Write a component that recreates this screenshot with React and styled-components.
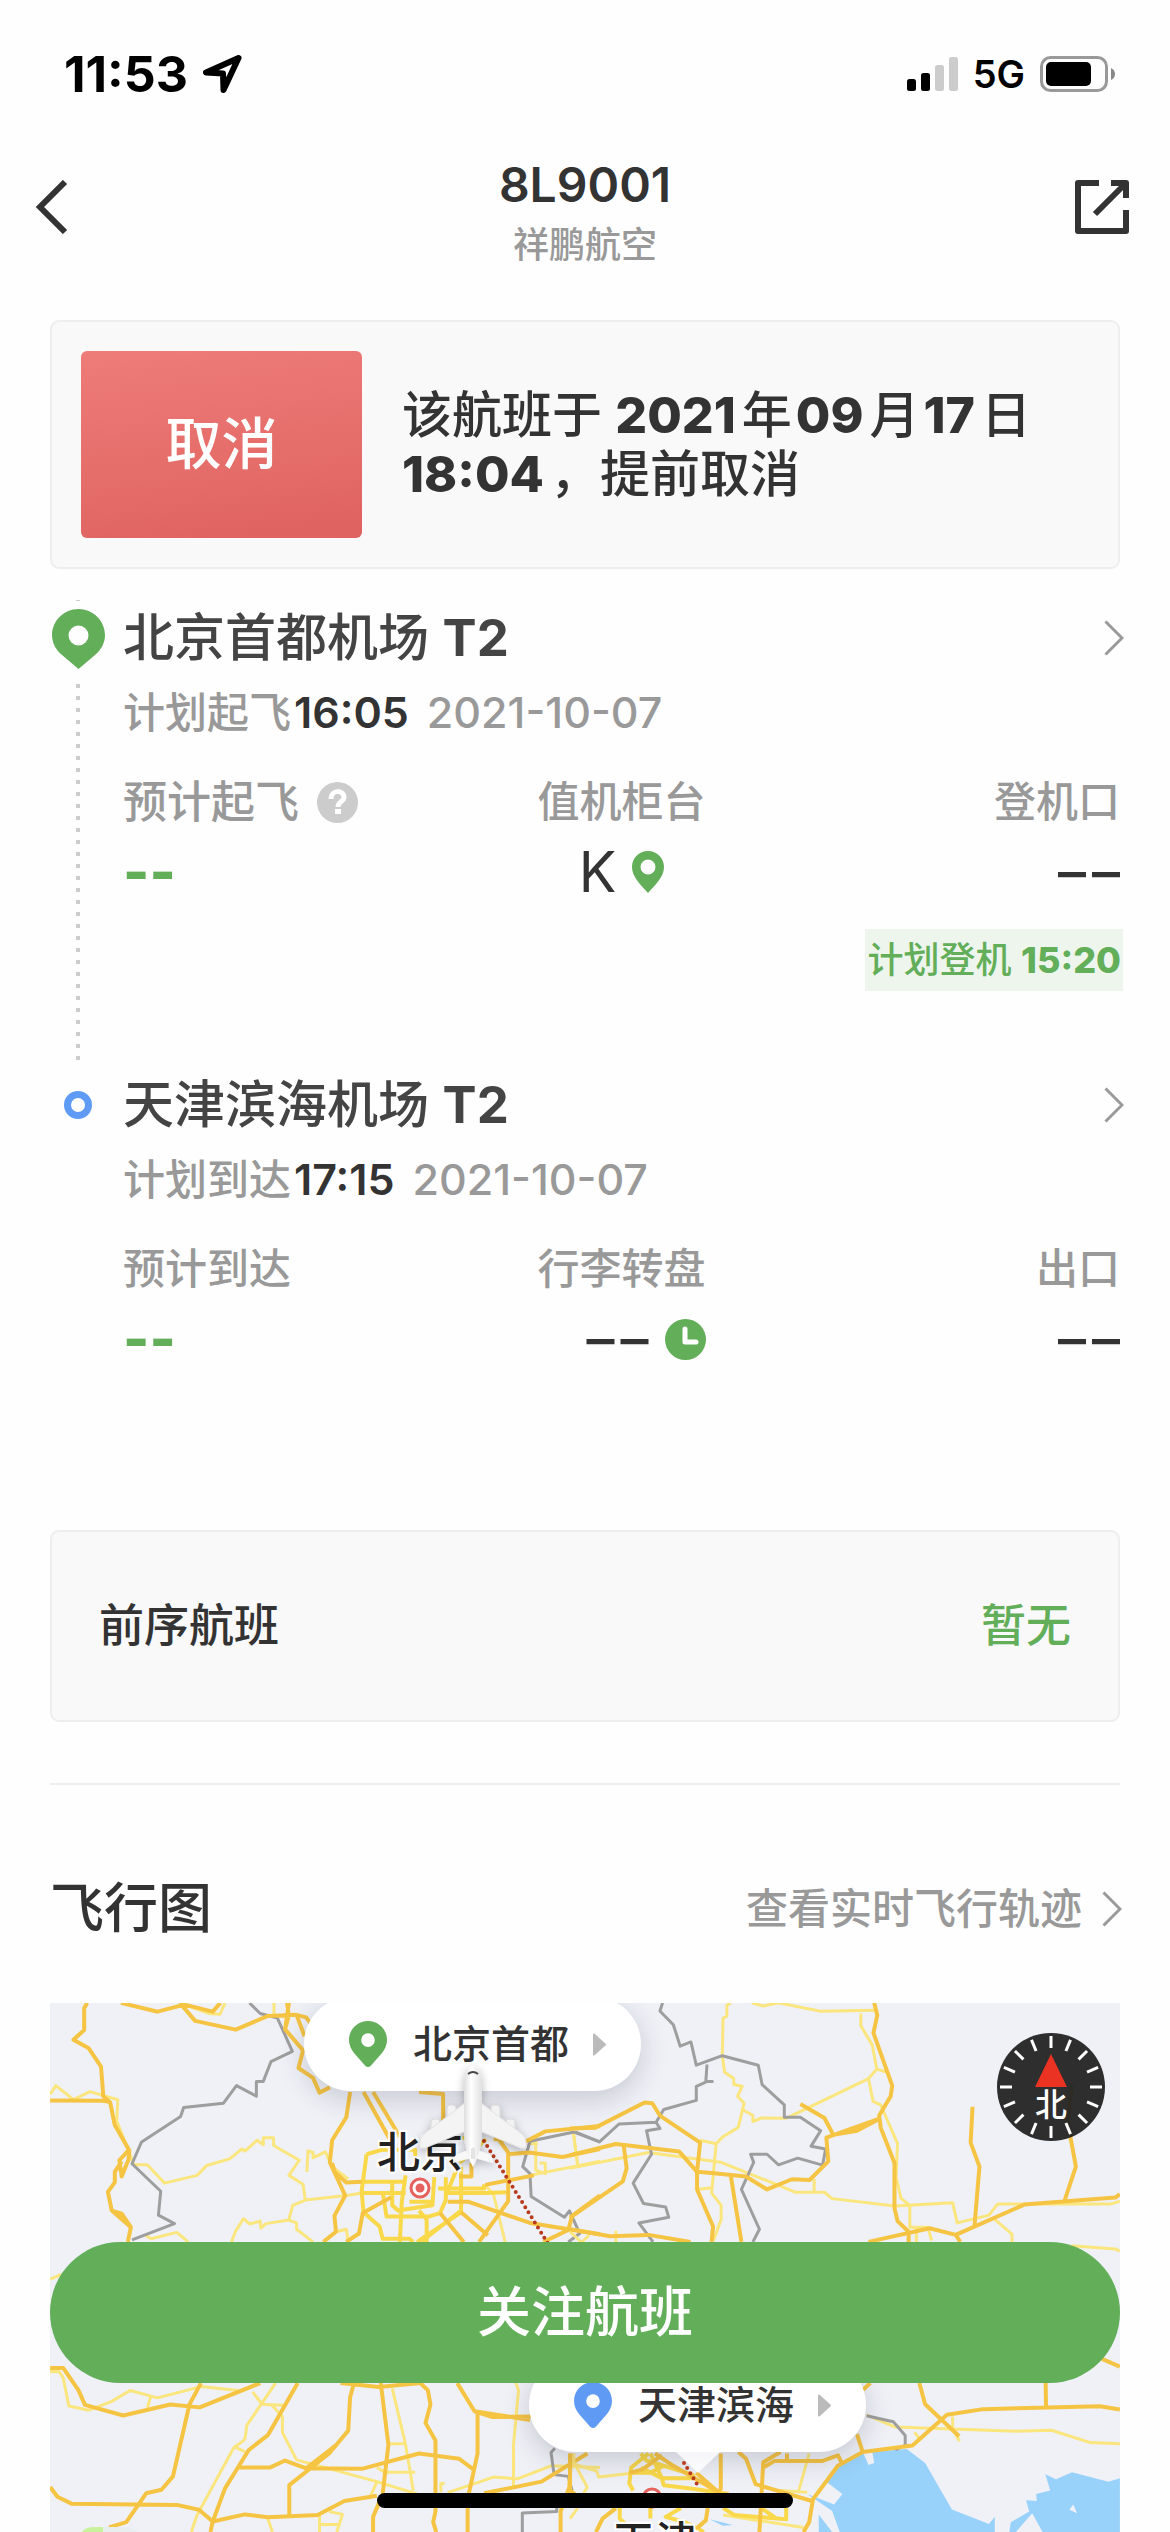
import React from "react";
import styled, { createGlobalStyle } from "styled-components";

const color = {
  ink: "#333333",
  title: "#444444",
  muted: "#999999",
  line: "#eeeeee",
  panel: "#f9f9f9",
  green: "#62ae59",
  blue: "#5f9bf5",
};

const GlobalStyle = createGlobalStyle`
  * { box-sizing: border-box; }
  body {
    margin: 0;
    background: #fefefe;
    color: ${color.ink};
    font-family: Inter, "Noto Sans CJK SC", sans-serif;
    font-weight: 500;
  }
  button { border: 0; padding: 0; background: none; color: inherit; font: inherit; cursor: pointer; }
  a { color: inherit; text-decoration: none; }
  h1, h2, p, dl, dd { margin: 0; font-weight: inherit; }
  svg { display: block; flex: none; }
`;

const Page = styled.div`
  display: flex;
  flex-direction: column;
  min-height: 100vh;
`;

const StatusBar = styled.div`
  display: flex;
  align-items: center;
  justify-content: space-between;
  height: 148px;
  padding: 0 54px 0 64px;
  color: #000;
`;

const StatusGroup = styled.div`
  display: flex;
  align-items: center;
  gap: 15px;
  font-size: ${(p) => p.$size}px;
  line-height: 60px;
  font-weight: ${(p) => p.$weight};
`;

const NavBar = styled.header`
  display: grid;
  grid-template-columns: 1fr auto 1fr;
  align-items: start;
  padding: 0 36px;
  margin-bottom: 47px;
`;

const NavButton = styled.button`
  justify-self: ${(p) => p.$side};
  padding: 32px 0;
`;

const NavTitle = styled.div`
  padding-top: 4px;
  text-align: center;
`;

const FlightNumber = styled.h1`
  font-size: 48px;
  font-weight: 600;
  line-height: 66px;
`;

const Airline = styled.p`
  font-size: 36px;
  line-height: 55px;
  color: ${color.muted};
`;

const Main = styled.main`
  display: flex;
  flex: 1;
  flex-direction: column;
  padding: 0 50px;
`;

const Panel = styled.section`
  display: flex;
  align-items: center;
  border: 2px solid ${color.line};
  border-radius: 9px;
  background: ${color.panel};
`;

const Notice = styled(Panel)`
  gap: 40px;
  padding: 29px;
`;

const StatusTag = styled.strong`
  flex: none;
  width: 281px;
  border-radius: 6px;
  background: linear-gradient(172deg, #ee7c79, #de625f);
  color: #fff;
  font-size: 56px;
  font-weight: 500;
  line-height: 187px;
  text-align: center;
`;

const NoticeText = styled.p`
  max-width: 660px;
  font-size: 50px;
  line-height: 59px;
`;

const Digits = styled.span`
  font-weight: 800;
`;

const DateDigits = styled(Digits)`
  margin: 0 6px 0 ${(p) => (p.$lead ? 4 : 0)}px;
`;

const Timeline = styled.div`
  padding-top: 31px;
`;

const Stop = styled.section`
  display: grid;
  grid-template-columns: 56px 1fr;
  gap: 17px;
`;

const Rail = styled.div`
  display: flex;
  flex-direction: column;
  align-items: center;
  gap: ${(p) => p.$gap}px;
  padding: ${(p) => p.$pad};
`;

const RailTip = styled.span`
  width: 4px;
  height: 1px;
  margin-bottom: -7px;
  background: #ccc;
`;

const DottedLine = styled.span`
  flex: 1;
  width: 4px;
  background: repeating-linear-gradient(#ccc 0 4px, transparent 4px 12px);
`;

const StopBody = styled.div`
  padding: ${(p) => p.$pad};
`;

const AirportLink = styled.a`
  display: flex;
  align-items: center;
  justify-content: space-between;
  margin-right: -4px;
`;

const AirportName = styled.h2`
  font-size: 51px;
  line-height: 60px;
  color: ${color.title};
`;

const Terminal = styled.span`
  font-weight: 700;
`;

const Schedule = styled.p`
  margin-top: 15px;
  font-size: 42px;
  line-height: 60px;
  color: ${color.muted};
`;

const ScheduleDate = styled.time`
  font-size: 43px;
  line-height: 1;
`;

const ScheduleTime = styled(ScheduleDate)`
  margin: 0 18px 0 3px;
  color: ${color.ink};
  font-weight: 600;
`;

const Facts = styled.dl`
  display: grid;
  grid-template-columns: 1fr auto 1fr;
  margin-top: 29px;
`;

const Fact = styled.div`
  justify-self: ${(p) => p.$side};
`;

const FactLabel = styled.dt`
  display: flex;
  align-items: center;
  justify-content: ${(p) => p.$side};
  gap: 18px;
  font-size: ${(p) => p.$size || 42}px;
  line-height: 60px;
  color: ${color.muted};
`;

const FactValue = styled.dd`
  display: flex;
  align-items: center;
  justify-content: ${(p) => p.$side};
  gap: 16px;
  margin-top: 10px;
  font-size: 56px;
  line-height: 60px;
  font-weight: ${(p) => (p.$estimate ? 800 : 400)};
  color: ${(p) => (p.$estimate ? color.green : color.ink)};
`;

const Dashes = styled.span`
  display: flex;
  gap: 6px;
  font-weight: 500;
`;

const BoardingBadge = styled.p`
  width: max-content;
  margin: 27px -3px 0 auto;
  padding: 0 2px;
  background: #eef5ed;
  color: ${color.green};
  font-size: 36px;
  line-height: 62px;
`;

const PreviousFlight = styled(Panel)`
  justify-content: space-between;
  margin-top: 161px;
  padding: 64px 47px;
  font-size: 45px;
  line-height: 60px;
`;

const NoneValue = styled.span`
  color: ${color.green};
`;

const Divider = styled.hr`
  width: 100%;
  height: 2px;
  margin: 61px 0 0;
  border: 0;
  background: ${color.line};
`;

const SectionHead = styled.div`
  display: flex;
  align-items: center;
  justify-content: space-between;
  margin: 94px -2px 64px 0;
  line-height: 60px;
`;

const SectionTitle = styled.h2`
  font-size: 54px;
`;

const TrackLink = styled.a`
  display: flex;
  align-items: center;
  gap: 20px;
  font-size: 42px;
  color: ${color.muted};
`;

const MapBox = styled.div`
  position: relative;
  flex: 1;
  min-height: 520px;
  overflow: hidden;
  background: #eff1f7;
`;

const MapDrawing = styled.svg`
  position: absolute;
  inset: 0;
  width: 100%;
  height: 529px;
  pointer-events: none;
`;

const MapPin = styled.button`
  position: absolute;
  top: ${(p) => p.$y}px;
  left: calc(50% + ${(p) => p.$x}px);
  display: flex;
  align-items: center;
  width: 337px;
  height: 94px;
  padding: 0 35px 0 45px;
  border-radius: 47px;
  background: #fff;
  box-shadow: 0 8px 28px rgba(40, 40, 60, 0.2);
  font-size: 39px;
  line-height: 60px;
`;

const PinName = styled.span`
  flex: 1;
  padding-left: 26px;
  text-align: left;
`;

const CityName = styled.span`
  position: absolute;
  top: ${(p) => p.$y}px;
  left: calc(50% + ${(p) => p.$x}px);
  color: #222;
  font-size: 43px;
  line-height: 60px;
  text-shadow: 0 0 2px #fff, 2px 2px 1px #fff, -2px -2px 1px #fff, 2px -2px 1px #fff, -2px 2px 1px #fff;
`;

const Compass = styled.button`
  position: absolute;
  top: 30px;
  right: 15px;
  width: 108px;
  height: 108px;
  border-radius: 50%;
  background: rgba(35, 35, 35, 0.95);
  color: #fff;
`;

const CompassDial = styled.svg`
  position: absolute;
  inset: 0;
`;

const CompassLabel = styled.span`
  display: block;
  padding-top: 36px;
  font-size: 32px;
  line-height: 72px;
`;

const FollowBar = styled.div`
  position: fixed;
  right: 50px;
  bottom: 149px;
  left: 50px;
  display: flex;
`;

const FollowButton = styled.button`
  flex: 1;
  height: 141px;
  border-radius: 71px;
  background: ${color.green};
  color: #fff;
  font-size: 54px;
  line-height: 60px;
`;

const HomeIndicator = styled.div`
  position: fixed;
  bottom: 24px;
  left: 50%;
  width: 416px;
  height: 15px;
  border-radius: 8px;
  background: #000;
  transform: translateX(-50%);
`;

const Chevron = () => (
  <svg width="20" height="36" viewBox="0 0 20 36" fill="none" stroke={color.muted} strokeWidth="3" aria-hidden="true">
    <path d="M1.5 1.5 18 18 1.5 34.5" />
  </svg>
);

const RailPin = () => (
  <svg width="53" height="60" viewBox="0 0 53 60" aria-hidden="true">
    <path fill={color.green} fillRule="evenodd" d="M26.500 0C41 0 53 12 53 26c0 8-4 15-10 20L26.500 60 10 46C4 41 0 34 0 26 0 12 12 0 26.500 0Zm0 16.500a10 10 0 1 0 0 20 10 10 0 0 0 0-20Z" />
  </svg>
);

const DropPin = ({ fill }) => (
  <svg width="38" height="46" viewBox="0 0 38 46" aria-hidden="true">
    <path fill={fill} fillRule="evenodd" d="M19 0c10.500 0 19 8.400 19 19 0 5-2 9-5 13L22 44.500c-2 2-4 2-6 0L5 32C2 28 0 24 0 19 0 8.400 8.500 0 19 0Zm0 12.300a6.800 6.800 0 1 0 0 13.600 6.800 6.800 0 0 0 0-13.600Z" />
  </svg>
);

const CounterPin = () => (
  <svg width="32" height="42" viewBox="0 0 32 42" aria-hidden="true">
    <path fill={color.green} fillRule="evenodd" d="M16 0c9 0 16 7 16 16 0 10-9 18-16 26C9 34 0 26 0 16 0 7 7 0 16 0Zm0 8.500a7.500 7.500 0 1 0 0 15 7.500 7.500 0 0 0 0-15Z" />
  </svg>
);

const Play = () => (
  <svg width="13" height="23" viewBox="0 0 13 23" aria-hidden="true">
    <path fill="#bbb" stroke="#bbb" strokeLinejoin="round" strokeWidth="2" d="M1 1.500 12 11.500 1 21.500Z" />
  </svg>
);

const motorways = [
  "M228 65 220 80V142L192 170 232 194 264 246 270 330 288 348 300 412 338 484 336 510 318 558 312 512 334 486M318 515 300 545V575L282 602 292 655 342 702 334 744M292 655 318 664 342 702",
  "M131 342 270 343 288 347M316 65 412 90 482 70 556 90 576 65M470 65 510 116 616 141 700 102 775 99 800 106 830 150M750 65 755 100 745 140 792 200 780 250 818 278 835 320 862 305M775 99 796 160M745 140 755 65",
  "M915 318 905 390 868 455 862 518 902 612 874 670 878 715 845 744M868 520 875 545 905 575 945 573M950 318 1020 455M975 318 1045 445M1095 318 1158 324V440M1262 390 1328 490V628L1252 744M905 744 938 720 948 662 1022 617M1170 630H1225L1385 690 1568 722M1290 452 1375 458 1425 430 1568 415M1328 495 1382 490 1470 503 1568 480M1568 612 1495 670 1485 710 1420 744M1268 582 1395 555M1232 520V558H1200M1150 662 1212 744M1205 660 1275 725",
  "M131 1102H165L205 1165 222 1207 322 1237 445 1206 522 1214 680 1145M525 1145 495 1206 452 1410 422 1448 382 1458 330 1540 285 1555M131 1440 150 1468 188 1488 462 1491 520 1505 556 1538 550 1568M778 1145 700 1293 650 1335 588 1444 556 1538 640 1518 700 1526 830 1520 900 1480 985 1465",
  "M925 1145 915 1185 910 1280 860 1345 756 1435V1520M625 1385H705L745 1365 800 1387 948 1388 1095 1345 1200 1360 1240 1392M880 1320 800 1387M890 1145 990 1156 1100 1145M995 1145 1015 1320 1000 1460 975 1525V1568M1098 1145 1118 1165 1125 1206 1112 1258 1138 1308V1510L1132 1540 1140 1568M1195 1145 1240 1225 1285 1241 1400 1240M1240 1225 1385 1250M1248 1230V1345L1222 1475V1568M1265 1458 1415 1425 1535 1345M1492 1345 1488 1440 1465 1510V1568",
];

const eastMotorways = [
  "M0 422 65 420 195 348 215 350 235 385 340 462 332 545 370 548 460 558 515 595 580 566 626 568 675 515 670 448 805 395M0 498 120 466 285 487 332 545V595L374 700 370 744M140 468 148 535 138 572 0 675M0 708 105 728 205 724 315 744M602 352 665 392 688 440 750 428 808 395M795 65 803 100 793 150 842 300 838 330 808 385 812 420 848 520V648L856 685 885 715V744M420 555 448 744",
  "M780 744 940 705 1008 724 1187 638 1425 618 1437 608M1052 360 1047 462 1070 530 1057 700M1312 300 1300 400 1322 530 1292 628M1008 724 1020 744M1437 1098 1390 1076M913 1145 928 1205 1017 1296M1243 1145 1244 1214M1437 1220 1385 1211 1080 1219 985 1235 895 1322 765 1341 750 1290M765 1341 700 1380 635 1475 625 1540 610 1568M785 1145 765 1165",
  "M440 1341 460 1360 485 1432 632 1480M550 1341 505 1370 495 1568M505 1385 535 1366H660L700 1350 712 1375M567 1345V1366M394 1345V1445L388 1455 330 1400M222 1345 270 1380 388 1455M0 1345V1450L30 1475M120 1500 85 1530 68 1568M360 1500 355 1535 320 1568M240 1350 190 1390 155 1400",
];

const minorRoads = [
  "M131 325 146 300 192 340 235 317 308 340 305 400 350 525H385L430 577 515 555 540 527 600 508 632 480 640 486 672 455 688 468V448H715V470L782 512 755 555 792 580 798 625M798 625 905 612 948 605M798 625 765 640 755 680M605 744 615 715 636 678 652 693 680 685 682 705 695 692 755 682 775 690V708L818 744M380 725 395 735 462 717 492 744M802 545 805 485 818 490V505L850 488 868 530 910 565M878 715 905 708 910 744",
  "M470 65 545 95 575 97 588 65M716 65V100M131 850 160 836M1320 744 1290 610 1268 582M1385 555 1568 515M1400 450V540L1425 550V520H1410M1385 465H1405M1498 435 1510 525",
  "M131 1112 155 1113 165 1130 180 1210 232 1222 292 1197 340 1166 412 1187 525 1155 622 1166M395 1180 385 1215M720 1145 645 1265 640 1305 610 1330 515 1520 500 1568M610 1325 640 1340M660 1170 685 1205 740 1208M710 1207 738 1240V1285L775 1363 985 1425 1090 1460M1025 1160 1060 1320 1080 1450M1015 1317H1058M985 1385 1005 1398H1085M985 1425 965 1475M1348 1145 1355 1165 1342 1320V1440M1170 1456 1290 1412 1352 1417 1440 1380 1568 1385M835 1520V1568M835 1547H888M860 1510 895 1518 880 1568M700 1530 712 1568M1162 1430H1152V1455",
];

const eastMinorRoads = [
  "M420 65 410 72V103L400 108 398 215 404 262 428 280V297L450 302 438 330 455 350 440 418 400 445 382 465 370 605 395 640V680L375 740M475 65 505 74 545 65 655 89 800 86M450 368 478 385V402L500 392 565 393 780 280 802 253 828 262M760 95V130L790 185 802 255M780 280 792 345 812 355 856 465 852 560 865 620 888 640V700L905 705V744M0 535 205 490 395 518 590 603H665L685 621 850 642 1000 633 1012 690 1095 668 1118 636H1415L1437 628M1110 680 1155 722V744M340 455 382 465M332 595 370 590M638 565V603M885 702H935L945 740",
  "M1310 755 1425 764 1437 770M775 1235 850 1270 1165 1282 1258 1279 1360 1314 1437 1317M1000 1240V1275L1018 1310M900 1285 912 1300M10 1345V1375L70 1395 75 1412 155 1402M15 1380 45 1440 35 1460M0 1530 20 1500M625 1345 598 1450M545 1450 620 1455M400 1520 610 1555M0 715 30 745 50 725M120 712V744M10 440 20 530",
];

const beijingRings = [
  "M958 495 1000 482H1085V500M958 495 945 600 950 660 992 700 1000 735 1070 735 1080 744M1025 570V640L1040 655 1130 640 1135 560M1000 600 1010 672H1120L1150 662 1165 625V560M1060 555 1050 630 1045 744M945 605H1060M945 573H1060M1145 592H1265V580M1165 605H1268L1328 603M1205 530V655L1100 744M1070 630H1130M1205 660 1090 744M1115 744V680L1095 655M1170 600 1200 520 1270 452M1220 450 1170 440",
];

const tianjinRings = [
  "M205 1345 160 1385 155 1430 165 1450M185 1345 200 1365 320 1405 325 1415 240 1415 245 1435 320 1445 415 1460M155 1400H210L245 1380M210 1345 240 1415 185 1385M130 1500V1530L160 1560M290 1500 250 1525 300 1540 350 1568M400 1500 430 1520 565 1532V1500M500 1500 540 1530M210 1500V1530",
];

const borders = [
  "M652 65 680 95 725 108 764 203 708 232 688 288H670V330L618 300 584 350 480 362 472 388 370 460 345 522 420 600 414 668 456 692 345 738M1568 460 1500 432 1385 458 1366 530 1385 550 1388 615 1475 674 1488 656 1515 720 1485 744M1450 1330 1440 1342 1448 1405 1485 1410 1495 1450M1455 1500V1510L1365 1514V1568",
];

const eastBorders = [
  "M242 65 235 88 270 127 288 188 316 176 330 242 398 215 492 242 502 297 560 355V390H602L655 428 630 472 668 480 660 526 595 506 545 525 515 495H472L480 518 448 595 495 708 478 744M358 240 355 288H375M355 290 330 302V342L245 368 225 404 128 409 77 460 15 432M225 404 235 422 200 428 213 495 165 577 192 635 250 645 258 674 180 690 217 744M775 1238 845 1255 876 1294V1322L850 1335",
];

const Roads = ({ paths, stroke, width }) =>
  paths.map((d) => <path key={d} d={d} stroke={stroke} strokeWidth={width} vectorEffect="non-scaling-stroke" />);

const Tile = ({ x, children }) => (
  <g transform={`translate(${x} -23) scale(.38266 .35204)`} fill="none" strokeLinejoin="round">
    {children}
  </g>
);

const CityMark = ({ x, y }) => (
  <g>
    <circle cx={x} cy={y} r="9" fill="#fff" stroke="#e5625f" strokeWidth="3" />
    <circle cx={x} cy={y} r="4.500" fill="#e5625f" />
  </g>
);

const MapBase = () => (
  <MapDrawing viewBox="0 0 1070 529" preserveAspectRatio="xMidYMin slice" aria-hidden="true">
    <Tile x={520}>
      <path fill="#98d2fa" d="M765 1341 780 1378 795 1372 790 1340 880 1332 928 1372 998 1504 1095 1545 1110 1525V1568H705L685 1508 620 1460 690 1490 712 1460 670 1425 700 1385Z" />
      <path fill="#98d2fa" d="M1148 1568 1152 1540 1200 1510 1192 1478 1220 1480 1218 1460 1255 1450 1242 1404 1270 1418 1312 1398 1407 1425 1437 1415V1568H1235L1208 1515 1165 1568ZM650 1518 685 1568H650ZM365 1532 425 1548 400 1550Z" />
      <path fill="#eff1f7" d="M1305 1505 1315 1490 1325 1515Z" />
    </Tile>
    <Tile x={-50}>
      <Roads paths={minorRoads} stroke="#fbe67e" width={3} />
      <Roads paths={beijingRings} stroke="#f9d84a" width={4} />
      <Roads paths={borders} stroke="#9e9e9e" width={3} />
      <Roads paths={motorways} stroke="#f6c443" width={4} />
    </Tile>
    <Tile x={520}>
      <Roads paths={eastMinorRoads} stroke="#fbe67e" width={3} />
      <Roads paths={tianjinRings} stroke="#f9d84a" width={4} />
      <Roads paths={eastBorders} stroke="#9e9e9e" width={3} />
      <Roads paths={eastMotorways} stroke="#f6c443" width={4} />
    </Tile>
    <CityMark x={370} y={185} />
    <CityMark x={602} y={495} />
    <path d="M32 529q3-5 13-5h30q8 0 12 5Z" fill="#e8eeee" />
    <path d="M32 529q3-5 13-5h8v5Z" fill="#c8f29b" />
  </MapDrawing>
);

const MapRoute = () => (
  <MapDrawing viewBox="0 0 1070 529" preserveAspectRatio="xMidYMin slice" aria-hidden="true">
    <defs>
      <linearGradient id="hull" x1="0" x2="1">
        <stop offset="0" stopColor="#dedede" />
        <stop offset=".4" stopColor="#fff" />
        <stop offset="1" stopColor="#e0e0e0" />
      </linearGradient>
      <filter id="drop" x="-30%" y="-30%" width="160%" height="160%">
        <feDropShadow dx="0" dy="3" stdDeviation="5" floodOpacity=".28" />
      </filter>
    </defs>
    <path d="M626 449h44l-22 21Z" fill="#fff" fillOpacity=".8" />
    <path d="M434 138 550 324M634 460 647 481" stroke="#b93b1c" strokeWidth="4" strokeLinecap="round" strokeDasharray="0 6" />
    <g filter="url(#drop)">
      <g fill="#f2f2f2" stroke="#d8d8d8">
        <rect x="397" y="102" width="9" height="15" rx="3" />
        <rect x="441" y="102" width="9" height="15" rx="3" />
        <rect x="381" y="116" width="9" height="13" rx="3" />
        <rect x="456" y="116" width="9" height="13" rx="3" />
      </g>
      <path d="M423 94v31l-48 20h-5q-1-10 4-14ZM423 94v31l48 20h5q1-10-4-14Z" fill="#f4f4f4" stroke="#e2e2e2" strokeWidth="1" />
      <path d="M421 146v9l-18 5q0-7 5-9ZM425 146v9l18 5q0-7-5-9Z" fill="#f8f8f8" />
      <path d="M423 63c6 0 9 8 9 19v48c0 12-4 24-9 34-5-10-9-22-9-34V82c0-11 3-19 9-19Z" fill="url(#hull)" />
      <path d="M418 71q5-4 10 0" fill="none" stroke="#444" strokeWidth="2" />
      <path d="M421 146q2-3 4 0v10h-4Z" fill="#e4e4e4" />
    </g>
  </MapDrawing>
);

const NoValue = () => (
  <Dashes>
    <span>–</span>
    <span>–</span>
  </Dashes>
);

const ticks = Array.from({ length: 16 }, (_, i) => i * 22.5);

const App = () => (
  <>
    <GlobalStyle />
    <Page>
      <StatusBar>
        <StatusGroup $size={50} $weight={700}>
          <time>11:53</time>
          <svg width="39" height="38" viewBox="0 0 39 38" fill="none" stroke="#000" strokeWidth="6" strokeLinejoin="round" aria-hidden="true">
            <path d="M35.500 3 3 17.500 20 18.500 20.500 35Z" />
          </svg>
        </StatusGroup>
        <StatusGroup $size={38} $weight={600}>
          <svg width="51" height="34" viewBox="0 0 51 34" aria-hidden="true">
            <rect y="22" width="9" height="12" rx="2.500" />
            <rect x="14" y="16" width="9" height="18" rx="2.500" />
            <g fill="#ccc">
              <rect x="28" y="8" width="9" height="26" rx="2.500" />
              <rect x="42" width="9" height="34" rx="2.500" />
            </g>
          </svg>
          <span>5G</span>
          <svg width="76" height="36" viewBox="0 0 76 36" aria-hidden="true">
            <rect x="1.500" y="1.500" width="65" height="33" rx="9" fill="none" stroke="#999" strokeWidth="3" />
            <rect x="6" y="6" width="45" height="24" rx="5" />
            <path d="M71 12q4 2 4 6t-4 6Z" fill="#888" />
          </svg>
        </StatusGroup>
      </StatusBar>

      <NavBar>
        <NavButton $side="start" aria-label="返回">
          <svg width="60" height="54" viewBox="0 0 60 54" fill="none" stroke={color.ink} strokeWidth="6">
            <path d="M29 2 4 27 29 52" />
          </svg>
        </NavButton>
        <NavTitle>
          <FlightNumber>8L9001</FlightNumber>
          <Airline>祥鹏航空</Airline>
        </NavTitle>
        <NavButton $side="end" aria-label="分享">
          <svg width="60" height="54" viewBox="0 0 60 54" fill="none" stroke={color.ink} strokeWidth="6" strokeLinejoin="round">
            <path d="M25 3H4v48h48V30M37 3h15v15M21 34 51 4" />
          </svg>
        </NavButton>
      </NavBar>

      <Main>
        <Notice>
          <StatusTag>取消</StatusTag>
          <NoticeText>
            该航班于 <DateDigits>2021</DateDigits>年<DateDigits $lead>09</DateDigits>月
            <DateDigits $lead>17</DateDigits>日 <DateDigits>18:04</DateDigits>，提前取消
          </NoticeText>
        </Notice>

        <Timeline>
          <Stop>
            <Rail $gap={15} $pad="0 0 15px">
              <RailTip />
              <RailPin />
              <DottedLine />
            </Rail>
            <StopBody $pad="8px 0 84px">
              <AirportLink href="#departure">
                <AirportName>
                  北京首都机场 <Terminal>T2</Terminal>
                </AirportName>
                <Chevron />
              </AirportLink>
              <Schedule>
                计划起飞<ScheduleTime>16:05</ScheduleTime>
                <ScheduleDate>2021-10-07</ScheduleDate>
              </Schedule>
              <Facts>
                <Fact $side="start">
                  <FactLabel $size={44}>
                    预计起飞
                    <button aria-label="说明">
                      <svg width="41" height="41" viewBox="0 0 41 41" fill="none">
                        <circle cx="20.500" cy="20.500" r="20.500" fill="#ccc" />
                        <path d="M14 17c0-10 13-9 13-2 0 5-6 4-6 10" stroke="#fff" strokeWidth="5" />
                        <path d="M18 27h6v5h-6Z" fill="#fff" />
                      </svg>
                    </button>
                  </FactLabel>
                  <FactValue $estimate>--</FactValue>
                </Fact>
                <Fact $side="center">
                  <FactLabel>值机柜台</FactLabel>
                  <FactValue $side="center">
                    K
                    <CounterPin />
                  </FactValue>
                </Fact>
                <Fact $side="end">
                  <FactLabel $side="end">登机口</FactLabel>
                  <FactValue $side="end">
                    <NoValue />
                  </FactValue>
                </Fact>
              </Facts>
              <BoardingBadge>
                计划登机 <Digits>15:20</Digits>
              </BoardingBadge>
            </StopBody>
          </Stop>

          <Stop>
            <Rail $pad="16px 0 0">
              <svg width="28" height="28" viewBox="0 0 28 28" aria-hidden="true">
                <circle cx="14" cy="14" r="10.500" fill="none" stroke={color.blue} strokeWidth="7" />
              </svg>
            </Rail>
            <StopBody>
              <AirportLink href="#arrival">
                <AirportName>
                  天津滨海机场 <Terminal>T2</Terminal>
                </AirportName>
                <Chevron />
              </AirportLink>
              <Schedule>
                计划到达<ScheduleTime>17:15</ScheduleTime>
                <ScheduleDate>2021-10-07</ScheduleDate>
              </Schedule>
              <Facts>
                <Fact $side="start">
                  <FactLabel>预计到达</FactLabel>
                  <FactValue $estimate>--</FactValue>
                </Fact>
                <Fact $side="center">
                  <FactLabel>行李转盘</FactLabel>
                  <FactValue $side="end">
                    <NoValue />
                    <svg width="41" height="41" viewBox="0 0 41 41" fill="none" aria-hidden="true">
                      <circle cx="20.500" cy="20.500" r="20.500" fill={color.green} />
                      <path d="M20 10v13h11" stroke="#fff" strokeWidth="5" strokeLinecap="round" strokeLinejoin="round" />
                    </svg>
                  </FactValue>
                </Fact>
                <Fact $side="end">
                  <FactLabel $side="end">出口</FactLabel>
                  <FactValue $side="end">
                    <NoValue />
                  </FactValue>
                </Fact>
              </Facts>
            </StopBody>
          </Stop>
        </Timeline>

        <PreviousFlight>
          <span>前序航班</span>
          <NoneValue>暂无</NoneValue>
        </PreviousFlight>
        <Divider />

        <SectionHead>
          <SectionTitle>飞行图</SectionTitle>
          <TrackLink href="#track">
            查看实时飞行轨迹
            <Chevron />
          </TrackLink>
        </SectionHead>

        <MapBox>
          <MapBase />
          <CityName $x={-208} $y={119}>北京</CityName>
          <CityName $x={27} $y={509}>天津</CityName>
          <MapPin $x={-281} $y={-6}>
            <DropPin fill={color.green} />
            <PinName>北京首都</PinName>
            <Play />
          </MapPin>
          <MapPin $x={-56} $y={355}>
            <DropPin fill={color.blue} />
            <PinName>天津滨海</PinName>
            <Play />
          </MapPin>
          <MapRoute />
          <Compass aria-label="指北针">
            <CompassDial viewBox="0 0 108 108" aria-hidden="true">
              <g stroke="#fff" strokeWidth="3">
                {ticks.map((a) => (
                  <path key={a} d="M54 3v12" transform={`rotate(${a} 54 54)`} />
                ))}
              </g>
              <path d="M54 21 70 54H38Z" fill="#ea3323" />
            </CompassDial>
            <CompassLabel>北</CompassLabel>
          </Compass>
        </MapBox>
      </Main>

      <FollowBar>
        <FollowButton>关注航班</FollowButton>
      </FollowBar>
      <HomeIndicator />
    </Page>
  </>
);

export default App;
